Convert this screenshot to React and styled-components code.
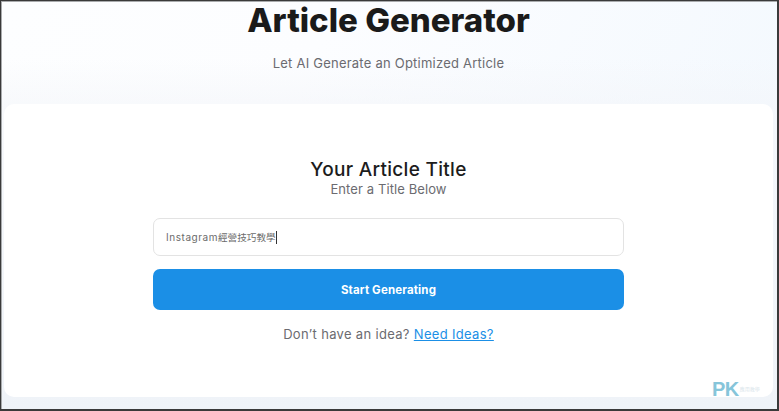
import React from "react";
import styled, { createGlobalStyle } from "styled-components";

const Global = createGlobalStyle`
  html, body { margin: 0; padding: 0; height: 100%; background: #fff; }
  #root { height: 100%; }
  * { box-sizing: border-box; }
`;

const Frame = styled.div`
  position: relative;
  width: 779px;
  height: 411px;
  overflow: hidden;
  border: 1px solid #3a3a3a;
  border-width: 1px 2px 2px 1px;
  padding-right: 1px;
  box-shadow: inset 1px 1px 0 #a9abad;
  background:
    linear-gradient(180deg, rgba(240, 243, 248, 0) 0%, rgba(240, 243, 248, 0) 14%, rgba(243, 245, 249, 0.55) 26%, #eff3f8 100%),
    linear-gradient(115deg, #fdfeff 0%, #fcfdff 35%, #f4f9fe 85%, #f6fafd 100%);
  font-family: Inter, "Noto Sans", sans-serif;
  display: flex;
  flex-direction: column;
  align-items: center;
`;

const Heading = styled.h1`
  margin: 0;
  height: 41px;
  font-size: 33px;
  line-height: 39px;
  font-weight: 800;
  color: #1a1a1a;
  letter-spacing: 0;
`;

const Subheading = styled.p`
  margin: 11px 0 0;
  height: 20px;
  font-size: 13px;
  line-height: 20px;
  color: #6b6b70;
  letter-spacing: 0.23px;
`;

const Card = styled.main`
  margin: 31px 0 0 0;
  width: 769px;
  height: 293px;
  background: #fff;
  border-radius: 10px;
  display: flex;
  flex-direction: column;
  align-items: center;
  padding-top: 54px;
`;

const CardTitle = styled.h2`
  margin: 0;
  font-size: 19px;
  line-height: 24px;
  font-weight: 500;
  color: #1c1c1c;
  letter-spacing: 0.3px;
`;

const CardSubtitle = styled.p`
  margin: -2px 0 0;
  font-size: 13px;
  line-height: 18px;
  color: #6b6b70;
  letter-spacing: 0.1px;
`;

const Field = styled.div`
  margin-top: 20px;
  width: 471px;
  height: 38px;
  border: 1px solid #e3e3e3;
  border-radius: 7px;
  background: #fff;
  display: flex;
  align-items: center;
  padding-left: 12px;
  font-size: 9.6px;
  color: #6b6b6b;
  font-family: Inter, "Noto Sans CJK TC", sans-serif;
`;

const Latin = styled.span`
  font-size: 10px;
  letter-spacing: 0.55px;
`;

const Caret = styled.span`
  display: inline-block;
  width: 1px;
  height: 13px;
  background: #333;
`;

const Submit = styled.button`
  margin-top: 13px;
  width: 471px;
  height: 41px;
  border: 0;
  border-radius: 7px;
  background: #1b8fe6;
  color: #fff;
  font: 700 11.5px Inter, sans-serif;
  letter-spacing: 0.15px;
  padding: 0;
`;

const Prompt = styled.p`
  margin: 15px 0 0;
  font-size: 13px;
  line-height: 18px;
  color: #6b6b70;
  letter-spacing: 0.32px;
`;

const IdeaLink = styled.a`
  color: #1b8fe6;
  text-decoration: underline;
`;

const Watermark = styled.div`
  position: absolute;
  left: 711px;
  top: 378px;
  display: flex;
  align-items: center;
  gap: 1px;
  font: 700 20px/20px "Liberation Sans", sans-serif;
  color: #86c5da;
  letter-spacing: -0.5px;
`;

const WatermarkNote = styled.span`
  font: 400 5px/6px "Noto Sans CJK TC", sans-serif;
  letter-spacing: 0;
  color: #dbe6ec;
`;

export default function App() {
  return (
    <Frame>
      <Global />
      <Heading>Article Generator</Heading>
      <Subheading>Let AI Generate an Optimized Article</Subheading>
      <Card>
        <CardTitle>Your Article Title</CardTitle>
        <CardSubtitle>Enter a Title Below</CardSubtitle>
        <Field><Latin>Instagram</Latin>經營技巧教學<Caret /></Field>
        <Submit>Start Generating</Submit>
        <Prompt>Don’t have an idea? <IdeaLink href="#">Need Ideas?</IdeaLink></Prompt>
      </Card>
      <Watermark>PK<WatermarkNote>應用教學</WatermarkNote></Watermark>
    </Frame>
  );
}
